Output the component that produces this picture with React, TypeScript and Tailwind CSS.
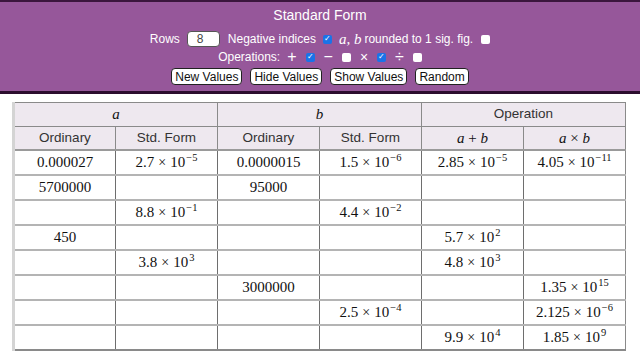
type Sci = [string, string];
type Cell = string | Sci | null;

const rows: Cell[][] = [
  ["0.000027", ["2.7", "−5"], "0.0000015", ["1.5", "−6"], ["2.85", "−5"], ["4.05", "−11"]],
  ["5700000", null, "95000", null, null, null],
  [null, ["8.8", "−1"], null, ["4.4", "−2"], null, null],
  ["450", null, null, null, ["5.7", "2"], null],
  [null, ["3.8", "3"], null, null, ["4.8", "3"], null],
  [null, null, "3000000", null, null, ["1.35", "15"]],
  [null, null, null, ["2.5", "−4"], null, ["2.125", "−6"]],
  [null, null, null, null, ["9.9", "4"], ["1.85", "9"]],
];

function Box({ on }: { on: boolean }) {
  return on ? (
    <span className="inline-flex items-center justify-center w-[9px] h-[9px] rounded-[2px] bg-[#1a73e8] text-white text-[8px] leading-none">
      ✓
    </span>
  ) : (
    <span className="inline-block w-[9px] h-[9px] rounded-[2px] bg-white"></span>
  );
}

function Btn({ label }: { label: string }) {
  return (
    <button className="bg-white border border-[#222] rounded-[4px] px-[3px] h-[17px] text-[12px] leading-none text-[#111]">
      {label}
    </button>
  );
}

function Value({ v }: { v: Cell }) {
  if (v === null) return null;
  if (typeof v === "string") return <span>{v}</span>;
  return (
    <span>
      {v[0]}
      <span className="mx-[4px] text-[14px]">×</span>10
      <sup className="text-[10.5px] relative top-[-6px] ml-[1px]">{v[1]}</sup>
    </span>
  );
}

export default function App() {
  const sans = { fontFamily: '"Liberation Sans", Arial, sans-serif' };
  const serif = { fontFamily: '"Liberation Serif", "DejaVu Serif", serif' };
  return (
    <div className="w-[640px] h-[362px] bg-white overflow-hidden" style={sans}>
      <div className="bg-[#96579a] border-t-2 border-[#3b163d] border-b-[3px] border-b-[#2c0d2e] h-[94px] flex flex-col items-center text-white">
        <div className="text-[14px] mt-[4px] h-[18px] leading-[18px]">Standard Form</div>
        <div className="flex items-center text-[12px] mt-[7px] h-[16px]">
          <span>Rows</span>
          <span className="ml-[7px] w-[33px] h-[16px] bg-white rounded-[4px] border border-[#555] text-[#444] text-[12px] leading-[14px] pl-[9px]">
            8
          </span>
          <span className="ml-[8px] mr-[7px]">Negative indices</span>
          <Box on={true} />
          <span className="italic text-[15px] ml-[7px] mr-[3px]" style={serif}>
            a, b
          </span>
          <span className="mr-[8px]">rounded to 1 sig. fig.</span>
          <Box on={false} />
        </div>
        <div className="flex items-center gap-[9px] text-[12px] mt-[2px] h-[16px]">
          <span className="mr-[-2px]">Operations:</span>
          <span className="text-[16px] leading-none">+</span>
          <Box on={true} />
          <span className="text-[16px] leading-none">−</span>
          <Box on={false} />
          <span className="text-[14px] leading-none">×</span>
          <Box on={true} />
          <span className="text-[16px] leading-none">÷</span>
          <Box on={false} />
        </div>
        <div className="flex items-center gap-[8px] mt-[3px]">
          <Btn label="New Values" />
          <Btn label="Hide Values" />
          <Btn label="Show Values" />
          <Btn label="Random" />
        </div>
      </div>
      <div className="pl-[12px] pt-[8px]">
        <table className="table-fixed border-collapse w-[614px] border-l-[3px] border-l-[#d4d4d4] border-r border-r-[#8a8a8a] border-t border-t-[#8a8a8a] text-[#111]">
          <thead>
            <tr className="bg-[#eee8ef] h-[21px]">
              <th colSpan={2} className="font-normal border-r border-[#8a8a8a] italic text-[15px]" style={serif}>
                a
              </th>
              <th colSpan={2} className="font-normal border-r border-[#8a8a8a] italic text-[15px]" style={serif}>
                b
              </th>
              <th colSpan={2} className="font-normal text-[13.5px] text-[#333]">
                Operation
              </th>
            </tr>
            <tr className="bg-[#eee8ef] h-[21px] border-t border-[#8a8a8a] border-b-2 border-b-[#9a9a9a] text-[#333]">
              <th className="font-normal text-[13.5px] border-r border-[#8a8a8a]">Ordinary</th>
              <th className="font-normal text-[13.5px] border-r border-[#8a8a8a]">Std. Form</th>
              <th className="font-normal text-[13.5px] border-r border-[#8a8a8a]">Ordinary</th>
              <th className="font-normal text-[13.5px] border-r border-[#8a8a8a]">Std. Form</th>
              <th className="font-normal text-[15px] border-r border-[#8a8a8a] text-[#111]" style={serif}>
                <span className="italic">a</span> + <span className="italic">b</span>
              </th>
              <th className="font-normal text-[15px] text-[#111]" style={serif}>
                <span className="italic">a</span> × <span className="italic">b</span>
              </th>
            </tr>
          </thead>
          <tbody>
            {rows.map((r, i) => (
              <tr key={i} className="h-[25px] border-b-2 border-b-[#b4b4b4] last:border-b-[#8a8a8a]">
                {r.map((c, j) => (
                  <td
                    key={j}
                    className={`text-center text-[15px] leading-none ${j < 5 ? "border-r border-r-[#6e6e6e]" : ""}`}
                    style={serif}
                  >
                    <Value v={c} />
                  </td>
                ))}
              </tr>
            ))}
          </tbody>
        </table>
      </div>
    </div>
  );
}
